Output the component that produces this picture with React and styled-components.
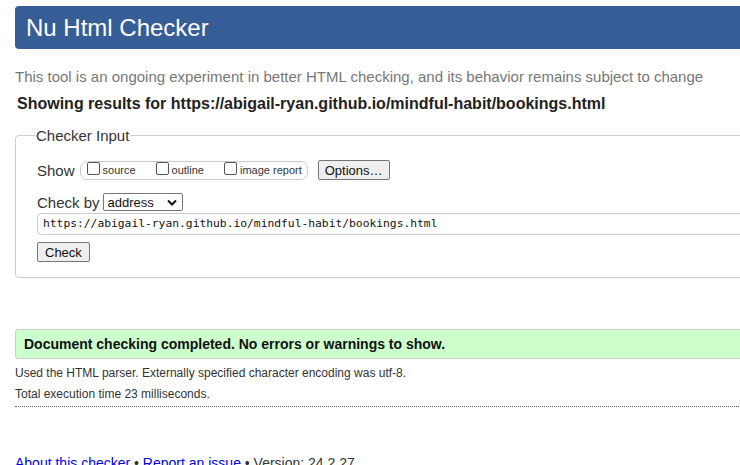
import React from "react";
import styled, { createGlobalStyle } from "styled-components";

const Global = createGlobalStyle`
  html, body { margin: 0; padding: 0; overflow: hidden; background: #fff; }
  body { font-family: "Liberation Sans", Arial, sans-serif; color: #222; }
`;

const Page = styled.div`
  width: 800px;
  padding: 6px 0 0 15px;
`;

const Header = styled.h1`
  margin: 0;
  height: 43px;
  background: #365d95;
  color: #fff;
  font-weight: normal;
  font-size: 24px;
  line-height: 43px;
  padding-left: 11px;
  border-radius: 4px 0 0 4px;
`;

const Intro = styled.p`
  margin: 19px 0 0;
  font-size: 15px;
  color: #777;
  line-height: 18px;
`;

const Results = styled.p`
  margin: 9px 0 0 2px;
  font-size: 16px;
  font-weight: bold;
  color: #222;
  line-height: 18px;
`;

const Fieldset = styled.fieldset`
  margin: 14px 0 0;
  border: 1px solid #ccc;
  border-radius: 4px 0 0 4px;
  padding: 4px 0 15px 21px;
`;

const Legend = styled.legend`
  font-size: 15px;
  color: #333;
  padding: 0 1px;
  margin-left: -2px;
`;

const Row = styled.div`
  display: flex;
  align-items: center;
  margin-top: ${(p) => p.$mt || 0}px;
`;

const Label = styled.span`
  font-size: 15px;
  color: #333;
`;

const ShowGroup = styled.div`
  display: flex;
  align-items: center;
  height: 17px;
  border: 1px solid #ccc;
  border-radius: 7px;
  padding: 0 5px 0 6px;
  margin-left: 5px;
`;

const CheckItem = styled.label`
  display: flex;
  align-items: center;
  font-size: 11px;
  color: #333;
  margin-right: ${(p) => p.$mr || 0}px;
`;

const Box = styled.span`
  display: inline-block;
  width: 11px;
  height: 11px;
  border: 1px solid #555;
  border-radius: 2px;
  margin-right: 3px;
  margin-top: -4px;
  background: #fff;
`;

const Button = styled.button`
  font-family: "Liberation Sans", Arial, sans-serif;
  font-size: 13px;
  color: #111;
  background: #efefef;
  border: 1px solid #767676;
  border-radius: 2px;
  height: 20px;
  padding: 0 ${(p) => p.$px || 8}px;
  margin: 0;
  margin-left: ${(p) => p.$ml || 0}px;
`;

const Select = styled.div`
  box-sizing: border-box;
  display: flex;
  align-items: center;
  justify-content: space-between;
  width: 80px;
  height: 18px;
  border: 1px solid #767676;
  border-radius: 2px;
  padding: 0 5px 0 4px;
  font-size: 13px;
  color: #111;
  margin-left: 3px;
`;

const UrlInput = styled.div`
  margin-top: 2px;
  height: 20px;
  border: 1px solid #ccc;
  border-right: none;
  border-radius: 5px 0 0 5px;
  padding-left: 5px;
  font-family: "DejaVu Sans Mono", "Liberation Mono", monospace;
  font-size: 11.3px;
  line-height: 20px;
  color: #111;
`;

const Success = styled.div`
  margin-top: 51px;
  height: 28px;
  background: #ccffcc;
  border: 1px solid #ccc;
  border-right: none;
  border-radius: 3px 0 0 3px;
  padding-left: 8px;
  font-size: 14px;
  font-weight: bold;
  line-height: 28px;
  color: #111;
`;

const Detail = styled.p`
  margin: ${(p) => p.$mt || 0}px 0 0;
  font-size: 12px;
  line-height: 14px;
  color: #333;
`;

const Rule = styled.hr`
  margin: 5px 0 0;
  border: none;
  border-top: 1px dotted #666;
`;

const Footer = styled.p`
  margin: 48px 0 0;
  font-size: 14px;
  color: #333;
  line-height: 17px;
`;

const Link = styled.a`
  color: #00e;
  text-decoration: none;
`;

export default function App() {
  return (
    <>
      <Global />
      <Page>
        <Header>Nu Html Checker</Header>
        <Intro>
          This tool is an ongoing experiment in better HTML checking, and its behavior remains subject to change
        </Intro>
        <Results>
          Showing results for https://abigail-ryan.github.io/mindful-habit/bookings.html
        </Results>
        <Fieldset>
          <Legend>Checker Input</Legend>
          <Row $mt={12}>
            <Label>Show</Label>
            <ShowGroup>
              <CheckItem $mr={20}>
                <Box />source
              </CheckItem>
              <CheckItem $mr={20}>
                <Box />outline
              </CheckItem>
              <CheckItem>
                <Box />image report
              </CheckItem>
            </ShowGroup>
            <Button $ml={10} $px={6}>Options…</Button>
          </Row>
          <Row $mt={13}>
            <Label>Check by</Label>
            <Select>
              address
              <svg width="10" height="7" viewBox="0 0 10 7">
                <path d="M1 1.5 L5 5.5 L9 1.5" stroke="#111" strokeWidth="2" fill="none" />
              </svg>
            </Select>
          </Row>
          <UrlInput>https://abigail-ryan.github.io/mindful-habit/bookings.html</UrlInput>
          <Row $mt={7}>
            <Button $px={7}>Check</Button>
          </Row>
        </Fieldset>
        <Success>Document checking completed. No errors or warnings to show.</Success>
        <Detail $mt={7}>Used the HTML parser. Externally specified character encoding was utf-8.</Detail>
        <Detail $mt={7}>Total execution time 23 milliseconds.</Detail>
        <Rule />
        <Footer>
          <Link href="#">About this checker</Link> • <Link href="#">Report an issue</Link> • Version: 24.2.27
        </Footer>
      </Page>
    </>
  );
}
